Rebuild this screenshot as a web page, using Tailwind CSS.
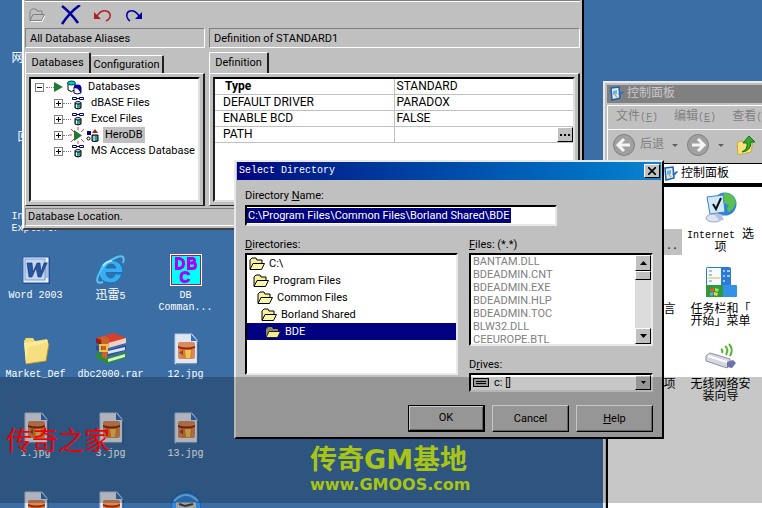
<!DOCTYPE html>
<html lang="zh-CN">
<head>
  <meta charset="UTF-8" />
  <title>Select Directory</title>
  <script src="https://cdn.jsdelivr.net/npm/@tailwindcss/browser@4"></script>
</head>
<body class="bg-[#3a6ea5] text-black font-[Roboto,'Noto_Sans_CJK_SC',sans-serif] text-[11px] leading-4">

  <!-- Shared icons -->
  <svg class="hidden">
    <symbol id="jpg" viewBox="0 0 32 32">
      <path d="M5 1h17l5 6v24H5z" fill="#dfe6f4" stroke="#b9c6dd"/>
      <path d="M21 1v7h6z" fill="#2e6fc0"/>
      <rect x="8" y="9" width="17" height="17" rx="2" fill="#d98a5a"/>
      <path d="M10 16h13l-2 9h-9z" fill="#e07a2c"/>
      <path d="M15 17h6l-1 8h-4z" fill="#edc35a"/>
      <path d="M8 13q9 3 17 0v2q-9 3-17 0z" fill="#96280f"/>
      <path d="M9 20l4-3v5z" fill="#7c4a52"/>
      <path d="M6 31h22V9" fill="none" stroke="#244f7e"/>
    </symbol>
    <symbol id="folder" viewBox="0 0 16 14">
      <path d="M1 12V3l2-2h4l1 2h5v3" fill="#f7ef9a" stroke="#000"/>
      <path d="M1 12.500l3-6h11.500l-3 6z" fill="#fbf6a8" stroke="#000"/>
    </symbol>
    <symbol id="plus" viewBox="0 0 9 9">
      <rect x=".5" y=".5" width="8" height="8" fill="#fff" stroke="#808080"/>
      <path d="M2 4h5v1H2zM4 2h1v5H4z"/>
    </symbol>
    <symbol id="db" viewBox="0 0 14 14">
      <path d="M1.500 1.500h4v2h-4zM8.500 1.500h4v2h-4zM5.500 2.500h3" fill="#fff" stroke="#000080"/>
      <path d="M4 7v5q3 2 6 0V7z" fill="#3c9a9a" stroke="#000"/>
      <path d="M5.500 8v4" stroke="#fff"/>
      <ellipse cx="7" cy="6.800" rx="3" ry="1.200" fill="#bff" stroke="#000"/>
    </symbol>
    <symbol id="panel" viewBox="0 0 16 16">
      <path d="M2 2l8-1 1 11-8 2z" fill="#dcebfb" stroke="#1d5fae" stroke-width="1.500"/>
      <path d="M4 5l4-1v4l-4 1z" fill="#6db0ee"/>
      <path d="M9 8l5-3 1 1-4 4z" fill="#2f71b5"/>
      <path d="M6 9l2 2" stroke="#d7a52b" stroke-width="1.500"/>
    </symbol>
  </svg>

  <main class="relative h-screen overflow-hidden">

    <!-- Desktop icons -->
    <div class="-ml-0.5 pt-[17px] grid grid-cols-[75px_75px_75px] auto-rows-[79px] text-center text-white font-['Liberation_Mono','Noto_Sans_CJK_SC',monospace] text-[10px] leading-3">
      <div class="col-start-1 flex flex-col items-center gap-1">
        <svg class="size-8" viewBox="0 0 32 32"><circle cx="14" cy="10" r="10" fill="#6fb8e8"/></svg>
        <span class="text-[12px]">网上邻居</span>
      </div>
      <div class="col-start-1 flex flex-col items-center gap-1">
        <div class="size-8"></div>
        <span class="text-[12px]">回收站</span>
      </div>
      <div class="col-start-1 flex flex-col items-center gap-1">
        <div class="size-8"></div>
        <span>Internet<br>Explorer</span>
      </div>
      <div class="col-start-1 flex flex-col items-center gap-1">
        <svg class="size-8" viewBox="0 0 32 32">
          <rect x="3" y="3" width="27" height="27" fill="#1d3f78"/>
          <rect x="3" y="3" width="26" height="26" fill="#e8f0fb" stroke="#2c5fa8"/>
          <rect x="5" y="5" width="20" height="21" fill="#c3d6f1" stroke="#7f9fd0"/>
          <path d="M26 8v16M28 8v16" stroke="#6b8fc8"/>
          <path d="M7 9h5l1 9 4-9h3l1 9 3-9h3l-6 14h-3l-2-9-4 9h-3z" fill="#2855a0" stroke="#12336e" stroke-width=".6"/>
        </svg>
        <span>Word 2003</span>
      </div>
      <div class="flex flex-col items-center gap-1">
        <svg class="size-8" viewBox="0 0 32 32">
          <path d="M27 20q-3 9-12 9Q4 28 4 18 5 7 16 6q12 1 12 12.500H11q1 5.500 5 5.500 3 0 4-4zM11 14h10q-1-4-5-4t-5 4z" fill="#38aef0" stroke="#1474c0" fill-rule="evenodd"/>
          <path d="M8 28q-8 3-5-6Q8 9 22 3q9-3 6 6" fill="none" stroke="#56c4f6" stroke-width="2"/>
          <path d="M8 12q3-5 9-5" fill="none" stroke="#c4ecff" stroke-width="1.500"/>
        </svg>
        <span><span class="text-[12px]">迅雷</span>5</span>
      </div>
      <div class="flex flex-col items-center gap-1">
        <svg class="size-8" viewBox="0 0 32 32">
          <rect x=".5" y=".5" width="31" height="31" fill="#0ff" stroke="#fff"/>
          <rect x="1.500" y="1.500" width="29" height="29" fill="none" stroke="#a02050"/>
          <g fill="none" stroke="#b000f0" stroke-width="3">
            <path d="M6.500 4.500v10h3q4-1 4-5t-4-5z"/>
            <path d="M18.500 4.500v10h4q3 0 3-3t-3-2.500h-3q5 0 5-2.500t-3-2z"/>
            <path d="M19 21q-1-2.500-4-2.500-4 0-4 4.500t4 4.500q3 0 4-2.500"/>
          </g>
        </svg>
        <span>DB<br>Comman...</span>
      </div>
      <div class="flex flex-col items-center gap-1">
        <svg class="size-8" viewBox="0 0 32 32">
          <path d="M4 8l2-3h7l2 3 12-2v3l2 2-3 17-20 3z" fill="#f2d970"/>
          <path d="M4 10l24-3-2 21-20 3z" fill="#fbec9c"/>
          <path d="M8 14l20-5-2 19-20 3z" fill="#f6df80"/>
          <path d="M6 31l20-3 3-17" fill="none" stroke="#b08d2a"/>
        </svg>
        <span>Market_Def</span>
      </div>
      <div class="flex flex-col items-center gap-1">
        <svg class="size-8" viewBox="0 0 32 32">
          <path d="M1 5l18-5 12 5v4L13 14 1 9z" fill="#d8402c"/>
          <path d="M1 5v5l12 5v-5z" fill="#8c1f17"/>
          <path d="M13 10l18-5v5l-18 5z" fill="#f4d0c4"/>
          <path d="M1 12l12 5 18-5v5l-18 6-12-6z" fill="#2b49a8"/>
          <path d="M13 18l17-4v3l-17 4z" fill="#dce4fa"/>
          <path d="M1 19l12 5 18-5v6l-18 6-12-6z" fill="#2c8a3a"/>
          <path d="M13 26l17-5v3l-17 5z" fill="#d6f0d2"/>
          <path d="M6 4l4-1 4 3-2 20-5-2z" fill="#c8622c"/>
          <rect x="5" y="12" width="7" height="6" fill="none" stroke="#f3c23b" stroke-width="2"/>
        </svg>
        <span>dbc2000.rar</span>
      </div>
      <div class="flex flex-col items-center gap-1">
        <svg class="size-8"><use href="#jpg"/></svg>
        <span>12.jpg</span>
      </div>
      <div class="flex flex-col items-center gap-1">
        <svg class="size-8"><use href="#jpg"/></svg>
        <span>1.jpg</span>
      </div>
      <div class="flex flex-col items-center gap-1">
        <svg class="size-8"><use href="#jpg"/></svg>
        <span>3.jpg</span>
      </div>
      <div class="flex flex-col items-center gap-1">
        <svg class="size-8"><use href="#jpg"/></svg>
        <span>13.jpg</span>
      </div>
      <div class="flex flex-col items-center"><svg class="size-8"><use href="#jpg"/></svg></div>
      <div class="flex flex-col items-center"><svg class="size-8"><use href="#jpg"/></svg></div>
      <div class="flex flex-col items-center">
        <svg class="size-8" viewBox="0 0 32 32">
          <circle cx="16" cy="16" r="15" fill="#2f86dc" stroke="#1b5ca8"/>
          <path d="M4 10q12-12 24 0" fill="none" stroke="#7cc0fa" stroke-width="2"/>
          <path d="M6 11h20v10H6z" fill="#9aa4ac"/><path d="M9 13l6 2 8-2" fill="none" stroke="#333" stroke-width="2"/>
        </svg>
      </div>
    </div>

    <!-- BDE Administrator window -->
    <section class="absolute left-[22px] top-0 w-[562px] bg-[#c0c0c0] border-l-2 border-l-white border-r-2 border-r-black border-b-2 border-b-[#404040] pl-px pr-[2px] pb-[2px] whitespace-nowrap">
      <div class="h-7 border-t border-[#808080]">
        <div class="border-t border-white flex items-center gap-3 pl-1 pt-px">
          <button aria-label="Open" class="h-6 w-5"><svg class="w-4 h-3.5" viewBox="0 0 16 14"><path d="M1 12V3l2-2h4l1 2h5v3M1 12.500l3-6h11.500l-3 6z" fill="none" stroke="#808080"/><path d="M2 13.500h11l3-6" fill="none" stroke="#fff"/></svg></button>
          <button aria-label="Delete" class="h-6 w-5"><svg class="w-5 h-5" viewBox="0 0 20 20"><path d="M1 1q8 6 16 17M19 0Q9 7 1 19" fill="none" stroke="#0000a0" stroke-width="2.500"/></svg></button>
          <button aria-label="Undo" class="h-6 w-5"><svg class="w-5 h-3.5" viewBox="0 0 20 14"><path d="M4 8q4-6 9-5 5 1 4 6-1 3-4 4" fill="none" stroke="#b02020" stroke-width="1.500"/><path d="M1 4v7h7z" fill="#b02020"/></svg></button>
          <button aria-label="Redo" class="h-6 w-5"><svg class="w-5 h-3.5" viewBox="0 0 20 14"><path d="M14 8q-4-6-9-5-4 1-3 6 1 3 3 4" fill="none" stroke="#0000a0" stroke-width="1.500"/><path d="M17 4v7h-7z" fill="#0000a0"/></svg></button>
        </div>
      </div>
      <div class="flex gap-1">
        <div class="w-[180px] shrink-0 h-5 px-1 border border-t-[#808080] border-l-[#808080] border-r-white border-b-white leading-5">All Database Aliases</div>
        <div class="grow h-5 px-1 border border-t-[#808080] border-l-[#808080] border-r-white border-b-white leading-5">Definition of STANDARD1</div>
      </div>
      <div class="flex gap-1 pt-1">
        <!-- Aliases tree -->
        <div class="w-[180px] shrink-0">
          <div class="flex items-end h-[21px]">
            <button class="w-[66px] h-[21px] border-l border-t border-white border-r-2 border-r-[#202020] rounded-t-xs">Databases</button>
            <button class="w-[73px] h-[18px] border-t border-white border-r-2 border-r-[#202020] rounded-t-xs">Configuration</button>
          </div>
          <div class="h-[133px] p-[3px] border-l border-t border-white border-r-2 border-r-[#202020] border-b border-b-[#202020]">
            <ul class="h-full bg-white border-2 border-t-black border-l-[#202020] border-r-[#dfdfdf] border-b-[#dfdfdf] pl-1">
              <li class="flex items-center h-4"><svg class="w-[9px] h-[9px]" viewBox="0 0 9 9"><rect x=".5" y=".5" width="8" height="8" fill="#fff" stroke="#808080"/><path d="M2 4h5v1H2z"/></svg>
                <span class="w-2 ml-0.5 border-t border-dotted border-[#808080]"></span>
                <svg class="w-[9px] h-[10px]" viewBox="0 0 9 10"><path d="M0 0l9 5-9 5z" fill="#207a30"/></svg>
                <svg class="size-[15px] ml-1" viewBox="0 0 15 15"><path d="M1 3v7q3 3 7 0V3z" fill="#fff" stroke="#000"/><ellipse cx="4.500" cy="3" rx="4" ry="2" fill="#0cc" stroke="#044"/><path d="M7 7v6q3 2 7 0V7z" fill="#fff" stroke="#000080"/><path d="M10 8l4 5v-6z" fill="#0000a0"/><ellipse cx="10.500" cy="6.500" rx="3.500" ry="2" fill="#0000a0"/></svg>
                <span class="ml-1.5">Databases</span></li>
              <li class="flex items-center h-4 ml-[19px]"><svg class="w-[9px] h-[9px]"><use href="#plus"/></svg><span class="w-2 border-t border-dotted border-[#808080]"></span><svg class="size-[14px]"><use href="#db"/></svg><span class="ml-1.5">dBASE Files</span></li>
              <li class="flex items-center h-4 ml-[19px]"><svg class="w-[9px] h-[9px]"><use href="#plus"/></svg><span class="w-2 border-t border-dotted border-[#808080]"></span><svg class="size-[14px]"><use href="#db"/></svg><span class="ml-1.5">Excel Files</span></li>
              <li class="flex items-center h-4 ml-[19px]"><svg class="w-[9px] h-[9px]"><use href="#plus"/></svg><span class="w-1.5 border-t border-dotted border-[#808080]"></span>
                <svg class="size-[17px]" viewBox="0 0 17 17"><path d="M5 3l8 5.500-8 5.500z" fill="#207a30"/><path d="M2 2l3 3M9 0v3M15 2l-3 3M0 8h3M2 15l3-3M9 17v-3M15 15l-3-3" stroke="#e04040"/></svg>
                <svg class="size-[13px]" viewBox="0 0 13 13"><path d="M1 2h4v4H1z" fill="#000080"/><path d="M9 0l3 4H6z" fill="#a02020"/><circle cx="2.500" cy="9.500" r="1.500" fill="#fff" stroke="#000"/><path d="M6 6v6q3 1 6 0V6z" fill="#3c9a9a" stroke="#000"/><path d="M8 7v5" stroke="#fff"/></svg>
                <span class="ml-1 px-0.5 bg-[#c0c0c0]">HeroDB</span></li>
              <li class="flex items-center h-4 ml-[19px]"><svg class="w-[9px] h-[9px]"><use href="#plus"/></svg><span class="w-2 border-t border-dotted border-[#808080]"></span><svg class="size-[14px]"><use href="#db"/></svg><span class="ml-1.5">MS Access Database</span></li>
            </ul>
          </div>
        </div>
        <!-- Definition grid -->
        <div class="grow">
          <button class="block w-[60px] h-[21px] border-l border-t border-white border-r-2 border-r-[#202020] rounded-t-xs">Definition</button>
          <div class="h-[133px] p-[3px] border-l border-t border-white border-r-2 border-r-[#202020] border-b border-b-[#202020]">
            <div class="h-full bg-white border-2 border-t-black border-l-[#202020] border-r-[#dfdfdf] border-b-[#dfdfdf]">
              <table class="w-full table-fixed border-collapse text-[12px] leading-[15px]">
                <tr class="border-b border-[#c0c0c0]"><th class="w-[179px] p-0 pl-2.5 text-left font-bold border-r border-[#c0c0c0]">Type</th><td class="p-0 pl-0.5">STANDARD</td></tr>
                <tr class="border-b border-[#c0c0c0]"><td class="p-0 pl-2 border-r border-[#c0c0c0]">DEFAULT DRIVER</td><td class="p-0 pl-0.5">PARADOX</td></tr>
                <tr class="border-b border-[#c0c0c0]"><td class="p-0 pl-2 border-r border-[#c0c0c0]">ENABLE BCD</td><td class="p-0 pl-0.5">FALSE</td></tr>
                <tr class="border-b border-[#c0c0c0]"><td class="p-0 pl-2 border-r border-[#c0c0c0]">PATH</td><td class="p-0"><button aria-label="Browse" class="ml-auto flex items-center justify-center gap-0.5 w-4 h-[15px] bg-[#c0c0c0] border border-t-white border-l-white border-r-black border-b-black"><i class="size-0.5 bg-black"></i><i class="size-0.5 bg-black"></i><i class="size-0.5 bg-black"></i></button></td></tr>
              </table>
            </div>
          </div>
        </div>
      </div>
      <div class="mt-0.5 h-[18px] px-0.5 border border-t-[#808080] border-l-[#808080] border-r-white border-b-white">Database Location.</div>
    </section>

    <!-- Control panel window -->
    <section class="absolute left-[603px] right-0 top-[81px] bottom-0 flex flex-col overflow-hidden bg-[#c0c0c0] border-l-2 border-t-2 border-[#e8e8e8] pl-0.5 pt-0.5 text-[12px] font-['Liberation_Mono','Noto_Sans_CJK_SC',monospace]">
      <div class="h-[18px] shrink-0 flex items-center gap-0.5 bg-[#808080] text-[#c8c8c8] pl-0.5"><svg class="size-4"><use href="#panel"/></svg>控制面板</div>
      <div class="h-[25px] shrink-0 mt-0.5 flex items-center gap-4 pl-2 whitespace-nowrap text-[#808080] border-t border-l border-b border-white">
        <span>文件<span class="text-[10px]">(<u>F</u>)</span></span><span>编辑<span class="text-[10px]">(<u>E</u>)</span></span><span>查看<span class="text-[10px]">(<u>V</u>)</span></span>
      </div>
      <div class="h-[30px] shrink-0 flex items-center pl-1 border-l border-white text-[#808080] whitespace-nowrap">
        <svg class="size-6 shrink-0" viewBox="0 0 24 24"><circle cx="12" cy="12" r="10.500" fill="#a0a0a0" stroke="#808080"/><path d="M18 12H7M12 6l-6 6 6 6" fill="none" stroke="#f4f4f4" stroke-width="3"/></svg>
        <span class="ml-1">后退</span>
        <svg class="w-1.5 h-[3px] mx-2 shrink-0" viewBox="0 0 6 3"><path d="M0 0h6L3 3z" fill="#606060"/></svg>
        <svg class="size-6 shrink-0" viewBox="0 0 24 24"><circle cx="12" cy="12" r="10.500" fill="#a0a0a0" stroke="#808080"/><path d="M6 12h11M12 6l6 6-6 6" fill="none" stroke="#f4f4f4" stroke-width="3"/></svg>
        <svg class="w-1.5 h-[3px] mx-2 shrink-0" viewBox="0 0 6 3"><path d="M0 0h6L3 3z" fill="#606060"/></svg>
        <svg class="ml-1 size-5 shrink-0" viewBox="0 0 20 20"><path d="M1 8l3-2 3 1 10-2-2 12-13 3z" fill="#f7e27c" stroke="#c9a93c"/><path d="M6 17q6-3 5-9H7l6-7 6 6h-4q0 9-9 10z" fill="#35a82b" stroke="#14701a"/></svg>
        <span class="ml-1.5 h-7 border-l border-[#808080]"></span>
      </div>
      <div class="h-[27px] shrink-0 pt-[3px] pl-[52px] border-b-2 border-black">
        <div class="h-[22px] flex items-center gap-0.5 pl-1 bg-white border-t border-b-2 border-black"><svg class="size-4 shrink-0"><use href="#panel"/></svg>控制面板</div>
      </div>
      <div class="grow -ml-px flex bg-white border-l-2 border-black pt-1 leading-3 text-center">
        <div class="w-[75px] shrink-0 flex flex-col">
          <div class="h-[75px] pt-[38px]"><div class="mx-px pb-0.5 bg-[#c0c0c0]">管理<br><span class="block pr-1 text-right text-[10px]">Tool...</span></div></div>
          <div class="h-[75px] pt-[38px]">区域和语言<br>选项</div>
          <div class="h-[75px] pt-[38px]">文件夹选项</div>
        </div>
        <div class="w-[75px] shrink-0 flex flex-col">
          <div class="h-[75px] flex flex-col items-center gap-1.5">
            <svg class="size-8" viewBox="0 0 32 32"><circle cx="20" cy="13" r="11.500" fill="#2f83d8"/><path d="M19 2q10 0 12 9-2 8-8 10-2-4 1-7-6-1-7-6z" fill="#5cc04c"/><path d="M2 6l16-2 2 17-15 2z" fill="#cfe9ff" stroke="#3a85cc"/><path d="M8 13l3 5 5-11" fill="none" stroke="#111" stroke-width="2"/><ellipse cx="9" cy="27" rx="8" ry="4" fill="#dde3f3" stroke="#9aa6c8"/><path d="M9 23h7l3 6h-5z" fill="#b6c0dd"/></svg>
            <span class="whitespace-nowrap"><span class="text-[10px]">Internet</span> 选<br>项</span>
          </div>
          <div class="h-[75px] flex flex-col items-center gap-1.5">
            <svg class="size-8" viewBox="0 0 32 32"><rect x="1" y="1" width="25" height="19" rx="2" fill="#2a7ad6"/><rect x="2" y="2" width="14" height="17" fill="#f6f9ff"/><path d="M4 5h3M4 9h3M4 15h3M18 5h2M18 10h2M18 15h2M22 5h3M22 10h3" stroke="#9cc6f4" stroke-width="2"/><path d="M3 12h12" stroke="#e9b73c"/><rect x="1" y="19" width="31" height="12" rx="1" fill="#3392e8"/><rect x="1" y="19" width="17" height="12" fill="#2f9a38"/><path d="M5 23l4-1v3l-4 1z" fill="#f05030"/><path d="M10 22l4 1-1 3-3-1z" fill="#9be05a"/><path d="M5 27l3-1v3l-3 1z" fill="#5aa8f8"/><path d="M9 26l4 1-1 3-3-1z" fill="#f8d040"/></svg>
            <span class="whitespace-nowrap">任务栏和「<br>开始」菜单</span>
          </div>
          <div class="h-[75px] flex flex-col items-center gap-1.5">
            <svg class="size-8" viewBox="0 0 32 32"><path d="M1 15l4-3 20 6v6l-3 3L1 20z" fill="#d4d6e2" stroke="#8b8fa8"/><path d="M3 15l19 6" stroke="#fff" stroke-width="2"/><path d="M22 21l6-2 3 3-4 5-5-1z" fill="#6d72a8"/><path d="M16 8q2 1 1 4M20 5q4 3 1 9M24 3q5 5 1 12" fill="none" stroke="#56b434" stroke-width="2"/></svg>
            <span class="whitespace-nowrap">无线网络安<br>装向导</span>
          </div>
        </div>
      </div>
    </section>

    <!-- Select Directory dialog -->
    <section class="absolute left-[234px] top-[160px] w-[430px] h-[279px] bg-[#c0c0c0] border-2 border-t-[#e8e8e8] border-l-[#e8e8e8] border-r-black border-b-black flex flex-col">
      <div class="h-[18px] mx-px flex items-center justify-between pl-0.5 pr-px bg-linear-to-r from-[#000080] to-[#1084d0] text-white font-['Liberation_Mono',monospace] text-[10px]">
        <h1>Select Directory</h1>
        <button aria-label="Close" class="w-4 h-3.5 flex items-center justify-center bg-[#c0c0c0] border border-t-white border-l-white border-r-black border-b-black"><svg class="w-2 h-2" viewBox="0 0 8 8"><path d="M0 0l8 8M8 0L0 8" stroke="#000" stroke-width="1.600"/></svg></button>
      </div>
      <form class="px-[9px] pt-2">
        <label for="dirname" class="block">Directory <u>N</u>ame:</label>
        <div class="mt-px w-[312px] h-[21px] flex items-center bg-white border-2 border-t-black border-l-black border-r-[#e8e8e8] border-b-[#e8e8e8]">
          <input id="dirname" type="text" value="C:\Program Files\Common Files\Borland Shared\BDE" class="field-sizing-content h-[15px] px-px bg-[#000080] text-white outline-none" />
        </div>
        <div class="flex gap-[11px] pt-[11px]">
          <div class="w-[213px]">
            <p><u>D</u>irectories:</p>
            <ul class="h-[122px] bg-white border-2 border-t-black border-l-black border-r-[#e8e8e8] border-b-[#e8e8e8]">
              <li class="h-[17px] flex items-center gap-1 pl-0.5"><svg class="w-4 h-3.5"><use href="#folder"/></svg>C:\</li>
              <li class="h-[17px] flex items-center gap-1 pl-1.5"><svg class="w-4 h-3.5"><use href="#folder"/></svg>Program Files</li>
              <li class="h-[17px] flex items-center gap-1 pl-2.5"><svg class="w-4 h-3.5"><use href="#folder"/></svg>Common Files</li>
              <li class="h-[17px] flex items-center gap-1 pl-3.5"><svg class="w-4 h-3.5"><use href="#folder"/></svg>Borland Shared</li>
              <li class="h-[17px] flex items-center gap-1 pl-[18px] bg-[#000080] text-white"><svg class="w-4 h-3.5" viewBox="0 0 16 14"><path d="M1 12V4l2-2h4l1 2h5v2z" fill="#8b8a55"/><path d="M1 12.500l3-6h11.500l-3 6z" fill="#f3eb96" stroke="#222"/></svg>BDE</li>
            </ul>
          </div>
          <div class="w-[184px]">
            <p><u>F</u>iles: (*.*)</p>
            <div class="h-[93px] flex bg-white border-2 border-t-black border-l-black border-r-[#e8e8e8] border-b-[#e8e8e8] overflow-hidden">
              <ul class="grow pl-0.5 text-[#808080] leading-[13px]">
                <li>BANTAM.DLL</li>
                <li>BDEADMIN.CNT</li>
                <li>BDEADMIN.EXE</li>
                <li>BDEADMIN.HLP</li>
                <li>BDEADMIN.TOC</li>
                <li>BLW32.DLL</li>
                <li>CEEUROPE.BTL</li>
              </ul>
              <div class="w-4 flex flex-col bg-[#dcdcdc]">
                <button type="button" aria-label="Scroll up" class="h-4 flex items-center justify-center bg-[#c0c0c0] border border-t-white border-l-white border-r-black border-b-black"><svg class="w-[7px] h-1" viewBox="0 0 7 4"><path d="M3.500 0L7 4H0z"/></svg></button>
                <div class="h-[9px] bg-[#c0c0c0] border border-t-white border-l-white border-r-black border-b-black"></div>
                <button type="button" aria-label="Scroll down" class="mt-auto h-4 flex items-center justify-center bg-[#c0c0c0] border border-t-white border-l-white border-r-black border-b-black"><svg class="w-[7px] h-1" viewBox="0 0 7 4"><path d="M0 0h7L3.500 4z"/></svg></button>
              </div>
            </div>
            <label for="drives" class="block pt-[11px]">D<u>r</u>ives:</label>
            <div class="relative h-[19px]">
              <select id="drives" class="block w-full h-[19px] pl-[23px] appearance-none leading-[15px] bg-white border-2 border-t-black border-l-black border-r-[#e8e8e8] border-b-[#e8e8e8]"><option>c: []</option></select>
              <svg class="absolute left-1 top-[5px] w-4 h-[9px]" viewBox="0 0 16 9"><rect x=".5" y=".5" width="15" height="8" fill="#c0c0c0" stroke="#000"/><path d="M3 3.500h10M3 5.500h10" stroke="#000"/></svg>
              <span class="absolute right-0.5 top-0.5 w-4 h-[15px] flex items-center justify-center bg-[#c0c0c0] border border-t-white border-l-white border-r-black border-b-black pointer-events-none"><svg class="w-[5px] h-[3px]" viewBox="0 0 5 3"><path d="M0 0h5L2.500 3z"/></svg></span>
            </div>
          </div>
        </div>
        <div class="flex justify-end gap-[7px] pt-[13px]">
          <button type="button" class="w-[77px] h-[27px] bg-[#c0c0c0] border border-black border-r-2 border-b-2 shadow-[inset_1px_1px_0_#fff,inset_-1px_-1px_0_#808080]">OK</button>
          <button type="button" class="w-[77px] h-[27px] bg-[#c0c0c0] border border-t-white border-l-white border-r-black border-b-black shadow-[inset_-1px_-1px_0_#808080]">Cancel</button>
          <button type="button" class="w-[77px] h-[27px] bg-[#c0c0c0] border border-t-white border-l-white border-r-black border-b-black shadow-[inset_-1px_-1px_0_#808080]"><u>H</u>elp</button>
        </div>
      </form>
    </section>

    <!-- Watermark band -->
    <div class="absolute inset-x-0 top-[377px] h-[126px] bg-black/22 pointer-events-none"></div>
    <p class="absolute left-1.5 top-[428px] text-[26px] leading-[26px] text-[#f00000]">传奇之家</p>
    <div class="absolute left-[310px] top-[447px] whitespace-nowrap text-[#a8c414] font-bold font-['DejaVu_Sans','Noto_Sans_CJK_SC',sans-serif]">
      <p class="text-[27px] leading-[26px]">传奇GM基地</p>
      <p class="pt-1 text-[16px] leading-4">www.GMOOS.com</p>
    </div>
  </main>
</body>
</html>
